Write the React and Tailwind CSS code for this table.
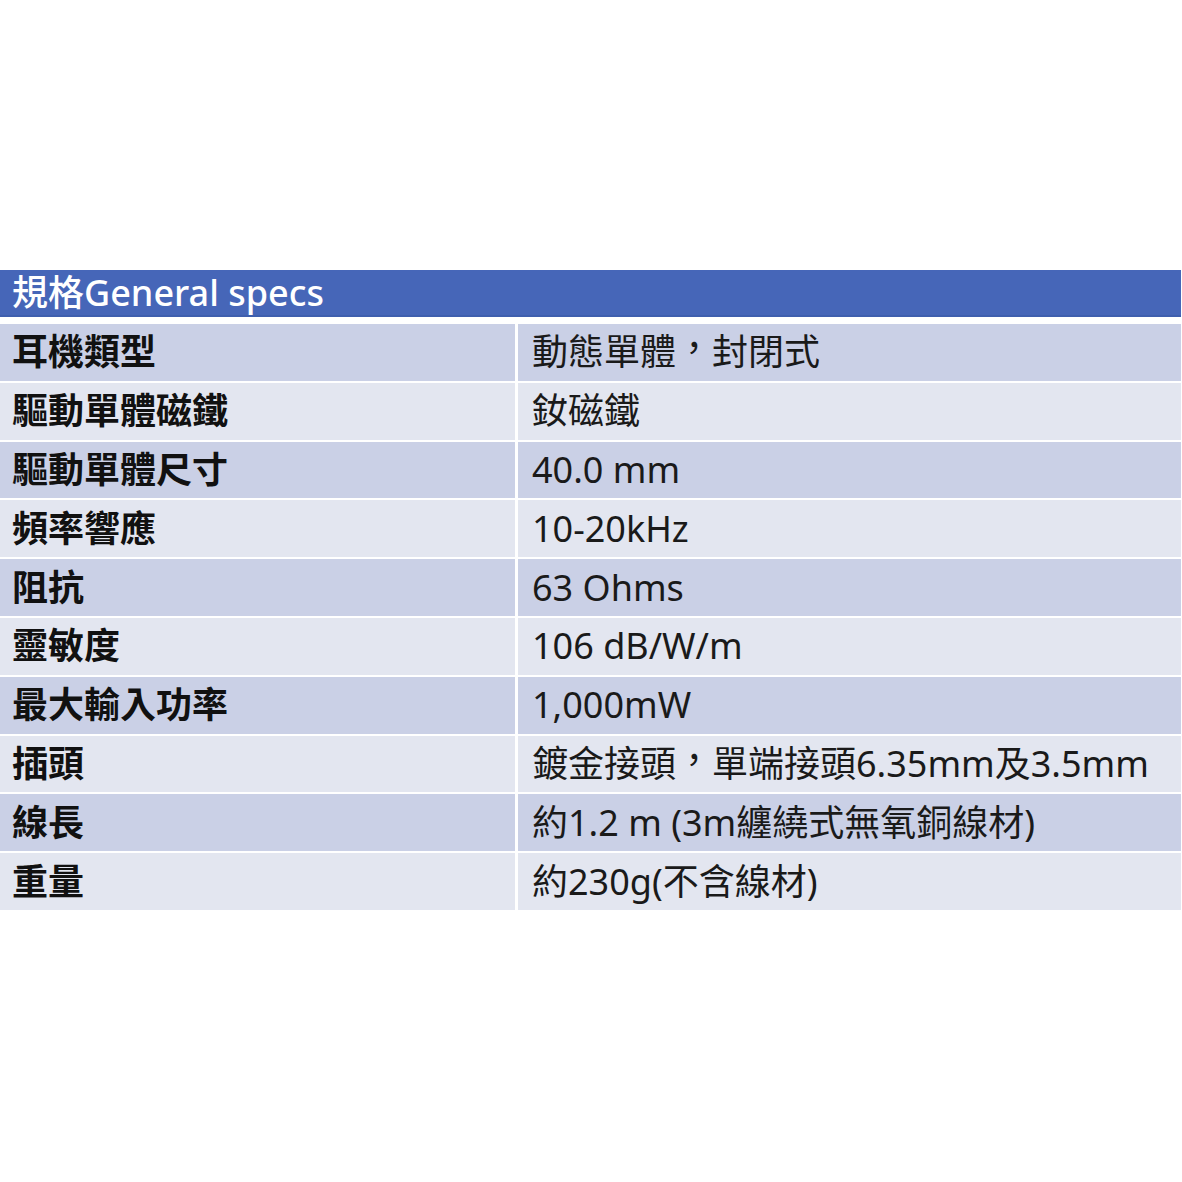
import React from "react";

const rows = [
  ["耳機類型", "動態單體，封閉式"],
  ["驅動單體磁鐵", "釹磁鐵"],
  ["驅動單體尺寸", "40.0 mm"],
  ["頻率響應", "10-20kHz"],
  ["阻抗", "63 Ohms"],
  ["靈敏度", "106 dB/W/m"],
  ["最大輸入功率", "1,000mW"],
  ["插頭", "鍍金接頭，單端接頭6.35mm及3.5mm"],
  ["線長", "約1.2 m (3m纏繞式無氧銅線材)"],
  ["重量", "約230g(不含線材)"],
];

// full-width comma sits centred in Taiwanese typesetting
function Value({ text }) {
  const parts = text.split("，");
  return parts.map((p, i) => (
    <React.Fragment key={i}>
      {p}
      {i < parts.length - 1 && (
        <span className="inline-block w-[36px] -translate-y-[4px]">，</span>
      )}
    </React.Fragment>
  ));
}

export default function App() {
  return (
    <div
      lang="zh-TW"
      className="w-[1182px] h-[1182px] bg-white pt-[270px]"
      style={{ fontFamily: '"Noto Sans", "Noto Sans CJK TC", sans-serif' }}
    >
      <div className="w-[1181px]">
        <div className="h-[47px] bg-[#4666b8] border-b-2 border-[#3f5fae] flex items-center px-3 text-white text-[36px] font-medium leading-none">
          規格General specs
        </div>
        <div className="mt-[7px] flex flex-col gap-[2px]">
          {rows.map(([k, v], i) => (
            <div key={k} className="h-[56.8px] flex gap-[3px]">
              <div
                className={`w-[515px] flex items-center px-3 text-[36px] font-bold text-[#111] ${
                  i % 2 === 0 ? "bg-[#cad0e6]" : "bg-[#e3e6f0]"
                }`}
              >
                {k}
              </div>
              <div
                className={`flex-1 flex items-center px-[14px] text-[36px] text-[#1a1a1a] whitespace-nowrap ${
                  i % 2 === 0 ? "bg-[#cad0e6]" : "bg-[#e3e6f0]"
                }`}
              >
                <span>
                  <Value text={v} />
                </span>
              </div>
            </div>
          ))}
        </div>
      </div>
    </div>
  );
}
